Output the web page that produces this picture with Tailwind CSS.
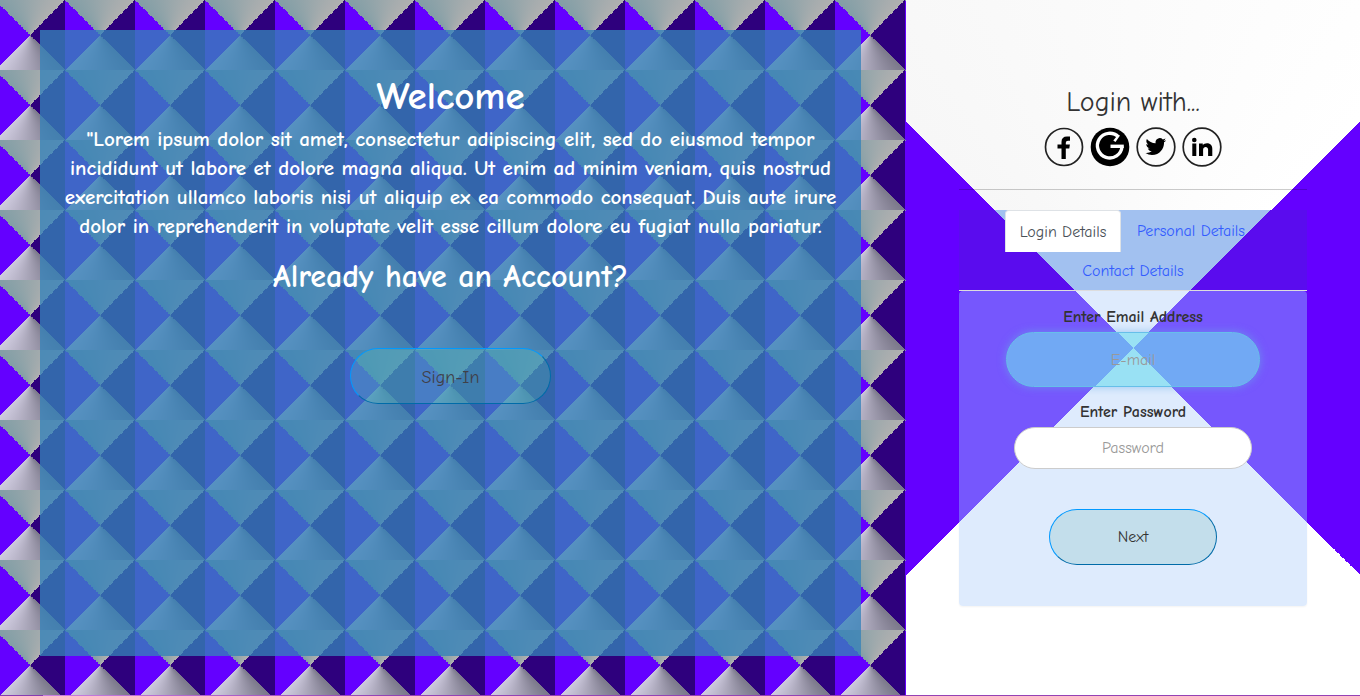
<!DOCTYPE html>
<html lang="en">
<head>
<meta charset="utf-8">
<meta name="viewport" content="width=device-width, initial-scale=1">
<title>Welcome</title>
<script src="https://cdn.jsdelivr.net/npm/@tailwindcss/browser@4"></script>
</head>
<body class="font-['Comic_Sans_MS','Comic_Neue','Noto_Sans',sans-serif] text-[#333]">
<div class="relative grid min-h-screen grid-cols-[906fr_454fr]">
  <main class="flex bg-[conic-gradient(from_-45deg,#829ea6,#b0b0b0_90deg,#2e007d_90deg_180deg,#7b788a_180deg,#cfcbdf_270deg,#6400ff_270deg)] bg-[length:70px_70px] bg-[position:-5px_0px] pt-[30px] pr-[45px] pb-10 pl-10">
    <section class="flex flex-1 flex-col items-center bg-[#3582b8]/78 px-2 pt-[43px] text-center text-white">
      <h1 class="text-[39px] leading-[48px] font-bold">Welcome</h1>
      <p class="mt-1 text-[21px] leading-[29px] font-bold">"Lorem ipsum dolor sit amet, consectetur adipiscing elit, sed do eiusmod tempor<br>incididunt ut labore et dolore magna aliqua. Ut enim ad minim veniam, quis nostrud<br>exercitation ullamco laboris nisi ut aliquip ex ea commodo consequat. Duis aute irure<br>dolor in reprehenderit in voluptate velit esse cillum dolore eu fugiat nulla pariatur.</p>
      <h2 class="mt-4 text-[32px] leading-[40px] font-bold">Already have an Account?</h2>
      <button type="button" class="mt-[51px] h-14 w-[201px] rounded-[30px] border border-t-[#0099ff] border-r-[#006ba8] border-b-[#006ba8] border-l-[#0099ff] bg-[#6ce0b8]/20 pt-1 text-lg text-[#404048]">Sign-In</button>
    </section>
  </main>

  <aside class="flex flex-col bg-[conic-gradient(from_-45deg,#f7f7f7,#ffffff_90deg,#6400ff_90deg_180deg,#ffffff_180deg_270deg,#6400ff_270deg)] px-[53px] pt-[86px] text-center">
    <h3 class="text-[28px] leading-8">Login with...</h3>
    <div class="mt-[9px] flex justify-center gap-[6px]">
      <a href="#" aria-label="Facebook"><svg class="size-10" viewBox="0 0 40 40"><circle cx="20" cy="20" r="18.5" fill="none" stroke="#222" stroke-width="1.7"/><path d="M17.500 32V21.500h-4v-4h4v-2.500q0-5.500 5.500-5.500h3v4.200h-2q-2.200 0-2.200 2v1.800h4.100l-.6 4h-3.500V32z" fill="#000"/></svg></a>
      <a href="#" aria-label="Google"><svg class="size-10" viewBox="0 0 40 40"><circle cx="20" cy="20" r="19.300" fill="#000"/><path d="M28.500 10A12.300 12.300 0 1 0 32 19.500" fill="none" stroke="#fff" stroke-width="3.400"/><path d="M20.500 17.600h13.300v3.400H20.500z" fill="#fff"/><path d="M30 8.500l-4.500 6.500-2.200-1.500 4-5z" fill="#fff"/></svg></a>
      <a href="#" aria-label="Twitter"><svg class="size-10" viewBox="0 0 40 40"><circle cx="20" cy="20" r="18.800" fill="none" stroke="#222" stroke-width="1.700"/><path transform="translate(9.500 9.200) scale(.86)" d="M23.953 4.570a10 10 0 01-2.825.775 4.958 4.958 0 002.163-2.723c-.951.555-2.005.959-3.127 1.184a4.920 4.920 0 00-8.384 4.482C7.690 8.095 4.067 6.130 1.640 3.162a4.822 4.822 0 00-.666 2.475c0 1.710.870 3.213 2.188 4.096a4.904 4.904 0 01-2.228-.616v.060a4.923 4.923 0 003.946 4.827 4.996 4.996 0 01-2.212.085 4.936 4.936 0 004.604 3.417 9.867 9.867 0 01-6.102 2.105c-.39 0-.779-.023-1.170-.067a13.995 13.995 0 007.557 2.209c9.053 0 13.998-7.496 13.998-13.985 0-.21 0-.42-.015-.63A9.935 9.935 0 0024 4.590z"/></svg></a>
      <a href="#" aria-label="LinkedIn"><svg class="size-10" viewBox="0 0 40 40"><circle cx="20" cy="20" r="18.800" fill="none" stroke="#222" stroke-width="1.700"/><g fill="#000"><circle cx="12.300" cy="13" r="2.300"/><path d="M10.300 16.500h4v12.500h-4zM17 16.500h3.800v1.700c2-3 9.500-2.900 9.500 3.500V29h-4.200v-6.300c0-3.800-5-3.500-5 0V29H17z"/></g></svg></a>
    </div>
    <hr class="mt-[22px] border-black/20">
    <nav class="mt-5 flex flex-wrap justify-center border-b border-[#ddd] bg-[conic-gradient(from_-45deg_at_50%_138px,#a2c1f0_90deg,#5a0cee_90deg)]">
      <a href="#" class="flex h-[42px] w-[116px] items-center justify-center rounded-t-sm border border-b-0 border-[#dee2e6] bg-white text-[#495057]">Login Details</a>
      <a href="#" class="flex h-[42px] w-[140px] items-center justify-center text-[#335cff]">Personal Details</a>
      <a href="#" class="flex h-[38px] w-[140px] items-center justify-center text-[#335cff]">Contact Details</a>
    </nav>
    <form class="flex flex-col items-center rounded bg-[conic-gradient(from_-45deg_at_50%_57px,#deebfd_90deg,#7657fd_90deg_180deg,#deebfd_180deg_270deg,#7657fd_270deg)] pt-4 pb-[41px] shadow-xs">
      <label for="email" class="leading-5 font-bold">Enter Email Address</label>
      <input id="email" type="email" placeholder="E-mail" class="mt-[5px] h-[55px] w-[254px] rounded-[28px] border border-[#66bfe9] bg-[conic-gradient(from_-45deg_at_50%_16px,#99e1f4_90deg,#71a9f4_90deg_180deg,#99e1f4_180deg_270deg,#71a9f4_270deg)] bg-origin-border text-center shadow-[0_0_8px_rgba(102,175,233,0.6)] outline-none placeholder:text-[#999]">
      <label for="password" class="mt-[15px] leading-5 font-bold">Enter Password</label>
      <input id="password" type="password" placeholder="Password" class="mt-[5px] h-[42px] w-[238px] rounded-[21px] border border-[#ccc] bg-white text-center outline-none placeholder:text-[#999]">
      <button type="button" class="mt-10 h-14 w-[168px] rounded-[30px] border border-t-[#0099ff] border-r-[#006ba8] border-b-[#006ba8] border-l-[#0099ff] bg-[#c3deeb]">Next</button>
    </form>
  </aside>
  <div class="absolute inset-x-0 bottom-0 h-px bg-linear-to-r from-[#8a3ab0] from-[43px] via-[#cb7ee0] via-[43px] to-[#9640b4] to-[387px]"></div>
</div>
</body>
</html>
